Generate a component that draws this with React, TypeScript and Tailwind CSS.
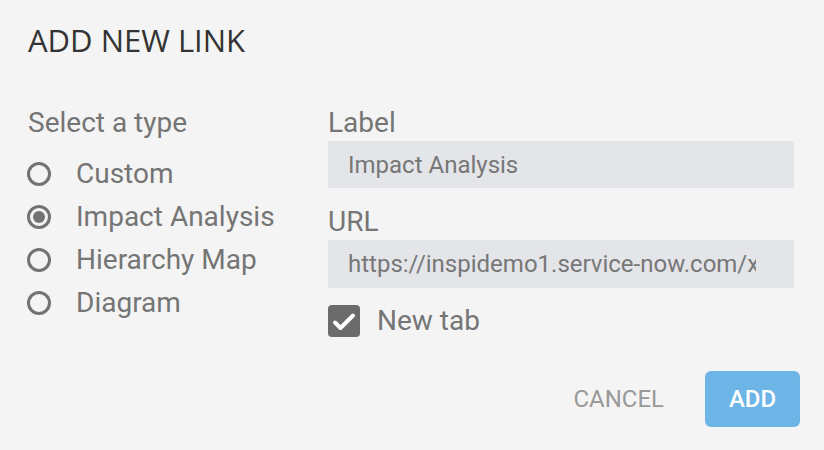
import React from "react";

function Radio({ checked }: { checked?: boolean }) {
  return (
    <span className="w-[24px] h-[24px] rounded-full border-[3px] border-[#737373] flex items-center justify-center shrink-0">
      {checked && <span className="w-[12px] h-[12px] rounded-full bg-[#737373]" />}
    </span>
  );
}

export default function App() {
  const types = ["Custom", "Impact Analysis", "Hierarchy Map", "Diagram"];
  return (
    <div className="w-[824px] h-[450px] bg-[#f4f4f4] pl-[27px] pr-[30px] pt-[23px] font-['Roboto',sans-serif] text-[#757575]">
      <h1 className="ml-[1px] font-['Open_Sans',sans-serif] text-[31px] leading-[34px] text-[#333333] h-[34px] whitespace-nowrap">ADD NEW LINK</h1>
      <div className="flex mt-[50px]">
        <div className="w-[301px] shrink-0 flex flex-col">
          <div className="ml-[1px] text-[28px] leading-[32px] h-[32px] whitespace-nowrap">Select a type</div>
          <div className="mt-[13px] flex flex-col">
            {types.map((t, i) => (
              <div key={t} className="h-[43px] flex items-center gap-[25px]">
                <Radio checked={i === 1} />
                <span className="text-[28px] leading-[32px] whitespace-nowrap">{t}</span>
              </div>
            ))}
          </div>
        </div>
        <div className="flex-1 min-w-0 flex flex-col">
          <div className="text-[28px] leading-[32px] h-[32px]">Label</div>
          <div className="mt-[2px] h-[47px] bg-[#e4e5e9] flex items-center px-[20px] text-[24px] text-[#777777]">
            Impact Analysis
          </div>
          <div className="mt-[18px] text-[28px] leading-[32px] h-[32px]">URL</div>
          <div className="mt-[2px] h-[48px] bg-[#e4e5e9] flex items-center pl-[20px] pr-[38px] text-[24px] text-[#777777] overflow-hidden whitespace-nowrap">
            <span className="overflow-hidden">https://inspidemo1.service-now.com/x_inspi_impact.do</span>
          </div>
          <div className="mt-[17px] flex items-center gap-[17px]">
            <span className="w-[32px] h-[32px] rounded-[4px] bg-[#6b6b6b] flex items-center justify-center shrink-0">
              <svg width="32" height="32" viewBox="0 0 32 32" fill="none" stroke="white" strokeWidth="4" strokeLinecap="round" strokeLinejoin="round">
                <path d="M7 17.5l5.5 5.5L25 10.5" />
              </svg>
            </span>
            <span className="text-[28px] leading-[32px]">New tab</span>
          </div>
        </div>
      </div>
      <div className="flex justify-end items-center mt-[34px] mr-[-6px]">
        <span className="text-[24px] text-[#999999] mr-[41px]">CANCEL</span>
        <span className="w-[95px] h-[56px] rounded-[6px] bg-[#6cb5e6] text-white text-[24px] font-medium flex items-center justify-center">ADD</span>
      </div>
    </div>
  );
}
